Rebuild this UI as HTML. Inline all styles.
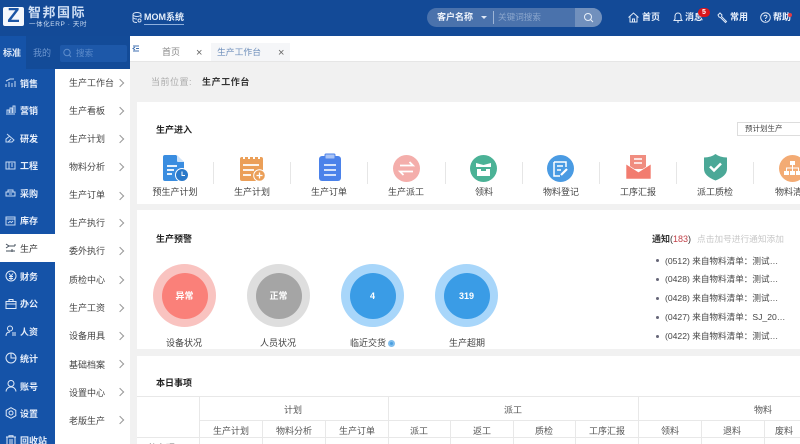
<!DOCTYPE html>
<html lang="zh"><head><meta charset="utf-8"><title>MOM系统</title>
<style>
*{box-sizing:border-box}
html,body{margin:0;padding:0;width:800px;height:444px;overflow:hidden;background:#f1f1f1;font-family:"Liberation Sans","Noto Sans CJK SC",sans-serif;color:#333}
#root{position:relative;width:800px;height:444px;overflow:hidden;background:#f1f1f1;filter:blur(.3px)}
.a{position:absolute;white-space:nowrap}
.s{position:absolute;left:20px;font-size:9px;line-height:14px;color:#e6eefa;font-weight:bold;white-space:nowrap}
.si{position:absolute;left:5px}
.m{position:absolute;left:69px;font-size:9px;line-height:14px;color:#444;white-space:nowrap}
.ch{position:absolute;left:117px;width:6px;height:6px;border-top:1px solid #999;border-right:1px solid #999;transform:rotate(45deg)}
.lab{position:absolute;font-size:9px;line-height:14px;color:#444;transform:translateX(-50%);white-space:nowrap}
.sep{position:absolute;top:162px;width:1px;height:22px;background:#e6e6e6}
.circ{position:absolute;top:264px;width:63px;height:63px;border-radius:50%}
.circ b{position:absolute;left:8.5px;top:8.5px;width:46px;height:46px;border-radius:50%;color:#fff;font-size:9px;line-height:46px;text-align:center}
.n{position:absolute;left:665px;font-size:8.6px;line-height:14px;color:#444;white-space:nowrap}
.dot{position:absolute;width:3px;height:3px;border-radius:50%;background:#667}
.h{position:absolute;background:#e8e8e8}
.th{position:absolute;font-size:9px;line-height:14px;color:#555;transform:translateX(-50%);white-space:nowrap}
svg{position:absolute;overflow:visible}
</style></head><body><div id="root">
<!-- header -->
<div class="a" style="left:0;top:0;width:800px;height:36px;background:#134a97"></div>
<div class="a" style="left:3px;top:7px;width:21px;height:19px;background:#f4f7fc;border-radius:2px"></div>
<div class="a" style="left:3px;top:6px;width:21px;height:21px;color:#1b55a5;font-size:20px;font-weight:bold;line-height:21px;text-align:center">Z</div>
<div class="a" style="left:28px;top:5px;font-size:13px;line-height:16px;letter-spacing:1.5px;color:#cfdff4;font-weight:bold">智邦国际</div>
<div class="a" style="left:29px;top:20px;font-size:6.5px;line-height:9px;letter-spacing:.6px;color:#cfdff4">一体化ERP · 天时</div>
<svg style="left:132px;top:12px" width="10" height="11" fill="none" stroke="#d5e2f5" stroke-width="1"><ellipse cx="5" cy="2.5" rx="4" ry="2"/><path d="M1 2.5V8.5C1 10 3 10.5 5 10.5M9 2.5V6M1 5.5C2 7 4 7 5 7"/><circle cx="7.5" cy="8.5" r="1.5"/></svg>
<div class="a" style="left:144px;top:11px;font-size:9px;line-height:13px;color:#e5eefa;font-weight:bold;border-bottom:1px solid #8fb0dd">MOM系统</div>
<!-- search -->
<div class="a" style="left:427px;top:8px;width:175px;height:19px;border-radius:10px;background:#4a72ac"></div>
<div class="a" style="left:575px;top:8px;width:27px;height:19px;border-radius:0 10px 10px 0;background:#7190bd"></div>
<div class="a" style="left:437px;top:11px;font-size:9px;line-height:13px;color:#eef3fb;font-weight:bold">客户名称</div>
<div class="a" style="left:481px;top:16px;border:3px solid transparent;border-top:3px solid #dfe8f5;border-bottom:0"></div>
<div class="a" style="left:493px;top:11px;width:1px;height:13px;background:#9db5d6"></div>
<div class="a" style="left:498px;top:11px;font-size:8.6px;line-height:13px;color:#8ba6cc">关键词搜索</div>
<svg style="left:583px;top:12px" width="11" height="11" fill="none" stroke="#e8eff9" stroke-width="1"><circle cx="5" cy="5" r="3.5"/><path d="M7.6 7.6L10 10"/></svg>
<svg style="left:628px;top:12px" width="11" height="11" fill="none" stroke="#dfe9f7" stroke-width="1"><path d="M.5 5.5L5.5 1L10.5 5.5M2 4.5V10H9V4.5M4.5 10V7H6.5V10"/></svg>
<div class="a" style="left:642px;top:11px;font-size:9px;line-height:13px;color:#e8f0fb;font-weight:bold">首页</div>
<svg style="left:673px;top:12px" width="10" height="11" fill="none" stroke="#dfe9f7" stroke-width="1"><path d="M1 8.5H9L8 7V4.5C8 2.5 6.8 1 5 1S2 2.5 2 4.5V7ZM4 10H6"/></svg>
<div class="a" style="left:685px;top:11px;font-size:9px;line-height:13px;color:#e8f0fb;font-weight:bold">消息</div>
<div class="a" style="left:698px;top:8px;width:12px;height:9px;border-radius:5px;background:#d9161e;color:#fff;font-size:7px;line-height:9px;text-align:center;font-weight:bold">5</div>
<svg style="left:717px;top:12px" width="11" height="11" fill="none" stroke="#dfe9f7" stroke-width="1"><path d="M1 3L3 1L5 3L4.5 4.5L9.5 9.5L8.5 10.5L3.5 5.5L2 5Z"/></svg>
<div class="a" style="left:730px;top:11px;font-size:9px;line-height:13px;color:#e8f0fb;font-weight:bold">常用</div>
<svg style="left:760px;top:12px" width="11" height="11" fill="none" stroke="#dfe9f7" stroke-width="1"><circle cx="5.5" cy="5.5" r="4.8"/><path d="M4 4.5C4 2.8 7 2.8 7 4.5C7 5.500 5.5 5.5 5.5 7M5.5 8V9"/></svg>
<div class="a" style="left:773px;top:11px;font-size:9px;line-height:13px;color:#e8f0fb;font-weight:bold">帮助</div>
<div class="a" style="left:788px;top:13px;width:4px;height:4px;border-radius:50%;background:#e23b45"></div>

<!-- sidebar -->
<div class="a" style="left:0;top:36px;width:55px;height:408px;background:#1553a8"></div>
<div class="a" style="left:26px;top:36px;width:29px;height:33px;background:#134b98"></div>
<div class="a" style="left:55px;top:36px;width:75px;height:33px;background:#134b98"></div>
<div class="a" style="left:60px;top:45px;width:67px;height:17px;border-radius:2px;background:#1d58a9"></div>
<svg style="left:63px;top:48px" width="9" height="10" fill="none" stroke="#5d8ccb" stroke-width="1"><circle cx="4" cy="4.5" r="3.2"/><path d="M6.3 7L8 9"/></svg>
<div class="a" style="left:76px;top:47px;font-size:8.6px;line-height:13px;color:#5d8ccb">搜索</div>
<div class="a" style="left:3px;top:47px;font-size:9px;line-height:13px;color:#dde8f7;font-weight:bold">标准</div>
<div class="a" style="left:33px;top:47px;font-size:9px;line-height:13px;color:#6d96cf">我的</div>
<div class="a" style="left:55px;top:69px;width:75px;height:375px;background:#fff"></div>
<div class="a" style="left:0;top:234px;width:55px;height:28px;background:#fff"></div>

<svg class="si" style="top:78px" width="11" height="10" fill="none" stroke="#c5d8f2"><path d="M1 9V6M4 9V4M7 9V5M10 9V3M1 3L5 1L9 1"/></svg><div class="s" style="top:77px">销售</div>
<svg class="si" style="top:105px" width="11" height="10" fill="none" stroke="#c5d8f2"><path d="M1 9H10M2 8V5H4V8M5 8V3H7V8M8 8V1H10V8"/></svg><div class="s" style="top:104px">营销</div>
<svg class="si" style="top:133px" width="11" height="10" fill="none" stroke="#c5d8f2"><path d="M2 1L9 7L7 9H1V6L5 3M3 9L6 6"/></svg><div class="s" style="top:132px">研发</div>
<svg class="si" style="top:161px" width="11" height="9" fill="none" stroke="#c5d8f2"><path d="M1 1H10V8H1ZM4 1V8M6 3H8M6 5H8"/></svg><div class="s" style="top:159px">工程</div>
<svg class="si" style="top:188px" width="11" height="9" fill="none" stroke="#c5d8f2"><path d="M1 4H10V8H1ZM3 4V2H8V4M4 6H7"/></svg><div class="s" style="top:187px">采购</div>
<svg class="si" style="top:216px" width="11" height="10" fill="none" stroke="#c5d8f2"><path d="M1 1H10V9H1ZM1 3H10M3 7L5 5.5L6.5 6.5L8 5"/></svg><div class="s" style="top:214px">库存</div>
<svg class="si" style="top:243px" width="11" height="10" fill="none" stroke="#46505e"><path d="M1 1L4 3L1 5M4 3H10M10 1V3M1 8H10M7 6V9"/></svg><div class="s" style="top:242px;color:#333;font-weight:normal">生产</div>
<svg class="si" style="top:270px" width="12" height="12" fill="none" stroke="#e0eaf8"><circle cx="6" cy="6" r="5"/><path d="M4 3.5L6 6L8 3.5M4 6.5H8M4 8.5H8M6 6V10"/></svg><div class="s" style="top:270px">财务</div>
<svg class="si" style="top:298px" width="12" height="12" fill="none" stroke="#e0eaf8"><path d="M1 3.5H11V10.5H1ZM4 3.5V1.5H8V3.5M1 6H11"/></svg><div class="s" style="top:297px">办公</div>
<svg class="si" style="top:325px" width="12" height="12" fill="none" stroke="#e0eaf8"><circle cx="5" cy="3.5" r="2.5"/><path d="M1 11C1 8 3 7 5 7M7 8H11M7 10H11"/></svg><div class="s" style="top:325px">人资</div>
<svg class="si" style="top:352px" width="12" height="12" fill="none" stroke="#e0eaf8"><circle cx="6" cy="6" r="5"/><path d="M6 1V6H11"/></svg><div class="s" style="top:352px">统计</div>
<svg class="si" style="top:380px" width="12" height="12" fill="none" stroke="#e0eaf8"><circle cx="6" cy="3.5" r="3"/><path d="M1 11.5C1.5 8.5 3.5 7 6 7S10.5 8.5 11 11.5"/></svg><div class="s" style="top:380px">账号</div>
<svg class="si" style="top:407px" width="12" height="12" fill="none" stroke="#e0eaf8"><path d="M6 .7L10.8 3.3V8.7L6 11.3L1.2 8.7V3.3Z"/><circle cx="6" cy="6" r="2"/></svg><div class="s" style="top:407px">设置</div>
<svg class="si" style="top:435px" width="12" height="12" fill="none" stroke="#e0eaf8"><path d="M1 2H11M4 2V.7H8V2M2 2V11H10V2M5 4V9M7 4V9"/></svg><div class="s" style="top:434px">回收站</div>

<div class="m" style="top:76px">生产工作台</div><div class="ch" style="top:80px"></div>
<div class="m" style="top:104px">生产看板</div><div class="ch" style="top:108px"></div>
<div class="m" style="top:132px">生产计划</div><div class="ch" style="top:136px"></div>
<div class="m" style="top:160px">物料分析</div><div class="ch" style="top:164px"></div>
<div class="m" style="top:188px">生产订单</div><div class="ch" style="top:193px"></div>
<div class="m" style="top:216px">生产执行</div><div class="ch" style="top:220px"></div>
<div class="m" style="top:244px">委外执行</div><div class="ch" style="top:248px"></div>
<div class="m" style="top:273px">质检中心</div><div class="ch" style="top:277px"></div>
<div class="m" style="top:301px">生产工资</div><div class="ch" style="top:305px"></div>
<div class="m" style="top:329px">设备用具</div><div class="ch" style="top:333px"></div>
<div class="m" style="top:358px">基础档案</div><div class="ch" style="top:361px"></div>
<div class="m" style="top:386px">设置中心</div><div class="ch" style="top:389px"></div>
<div class="m" style="top:414px">老版生产</div><div class="ch" style="top:417px"></div>

<!-- tabs -->
<div class="a" style="left:130px;top:36px;width:670px;height:26px;background:#fff;border-bottom:1px solid #e6e6e6"></div>
<div class="a" style="left:211px;top:43px;width:79px;height:18px;background:#f5f6f8"></div>
<svg style="left:133px;top:45px" width="7" height="7" fill="none" stroke="#3f6fb0"><path d="M0 1H6M3 3.5H6M0 6H6M2 2L0 3.5L2 5"/></svg>
<div class="a" style="left:162px;top:45px;font-size:9px;line-height:14px;color:#888">首页</div>
<div class="a" style="left:196px;top:46px;font-size:11px;line-height:14px;color:#666">×</div>
<div class="a" style="left:217px;top:45px;font-size:8.8px;line-height:14px;color:#6e8fbb">生产工作台</div>
<div class="a" style="left:278px;top:46px;font-size:11px;line-height:14px;color:#666">×</div>

<div class="a" style="left:151px;top:75px;font-size:9px;line-height:14px;color:#aaa;letter-spacing:.5px">当前位置:</div>
<div class="a" style="left:202px;top:75px;font-size:9px;line-height:14px;color:#333;font-weight:bold;letter-spacing:.6px">生产工作台</div>

<!-- card 1 -->
<div class="a" style="left:137px;top:102px;width:663px;height:102px;background:#fff"></div>
<div class="a" style="left:156px;top:123px;font-size:9px;line-height:14px;color:#222;font-weight:bold">生产进入</div>
<div class="a" style="left:737px;top:122px;width:70px;height:14px;background:#fff;border:1px solid #ddd;font-size:7.5px;line-height:12px;padding-left:7px;color:#444">预计划生产</div>

<svg style="left:162px;top:155px" width="27" height="27"><path d="M1 2Q1 0 3 0H14L22 7V24Q22 26 20 26H3Q1 26 1 24Z" fill="#3a8de0"/><path d="M15 0L22 7H16Q15 7 15 6Z" fill="#cfe3f8"/><path d="M5 11H15M5 15H12M5 19H10" stroke="#fff" stroke-width="1.8"/><circle cx="20" cy="20" r="6.5" fill="#2b79c9" stroke="#fff"/><path d="M20 16.5V20.5H23" stroke="#fff" fill="none"/></svg>
<div class="lab" style="left:175px;top:185px">预生产计划</div>
<div class="sep" style="left:213px"></div>
<svg style="left:240px;top:155px" width="26" height="27"><rect x="0" y="2" width="23" height="24" rx="2" fill="#eb9f58"/><path d="M4 0V4M9 0V4M14 0V4M19 0V4" stroke="#fff" stroke-width="2"/><path d="M3 10H19M3 15H14M3 20H11" stroke="#fff" stroke-width="1.8"/><circle cx="19.5" cy="20.5" r="5.8" fill="#eb9f58" stroke="#fff"/><path d="M16.5 20.5H22.5M19.5 17.5V23.5" stroke="#fff" stroke-width="1.3"/></svg>
<div class="lab" style="left:252px;top:185px">生产计划</div>
<div class="sep" style="left:290px"></div>
<svg style="left:319px;top:154px" width="23" height="27"><rect x="0" y="2" width="22" height="25" rx="3" fill="#4b82ea"/><rect x="6" y="0" width="10" height="5" rx="1" fill="#a9c3f5" stroke="#4b82ea"/><path d="M5 11H17M5 16H17M5 21H17" stroke="#fff" stroke-width="1.5"/></svg>
<div class="lab" style="left:329px;top:185px">生产订单</div>
<div class="sep" style="left:367px"></div>
<svg style="left:393px;top:155px" width="27" height="27"><circle cx="13.5" cy="13.5" r="13.5" fill="#f4aeab"/><path d="M7 10.5H20L16.5 7M20 16.5H7L10.5 20" stroke="#fff" stroke-width="1.8" fill="none"/></svg>
<div class="lab" style="left:406px;top:185px">生产派工</div>
<div class="sep" style="left:445px"></div>
<svg style="left:470px;top:155px" width="27" height="27"><circle cx="13.5" cy="13.5" r="13.5" fill="#4bb296"/><path d="M6 8L13.5 10L21 8V12H6ZM7 14H20V21H7Z" fill="#fff"/><path d="M11 13H16V16H11Z" fill="#4bb296"/></svg>
<div class="lab" style="left:484px;top:185px">领料</div>
<div class="sep" style="left:522px"></div>
<svg style="left:547px;top:155px" width="27" height="27"><circle cx="13.5" cy="13.5" r="13.5" fill="#4a9be3"/><path d="M7 7H19V12M7 7V21H13M10 11H16M10 15H14" stroke="#fff" stroke-width="1.5" fill="none"/><path d="M14 20L20 14" stroke="#fff" stroke-width="2.2"/></svg>
<div class="lab" style="left:561px;top:185px">物料登记</div>
<div class="sep" style="left:599px"></div>
<svg style="left:626px;top:155px" width="25" height="25"><path d="M4 0H20V14H4Z" fill="#f08d80"/><path d="M8 4H16M8 8H16" stroke="#fff" stroke-width="1.5"/><path d="M0 9L12.5 17L25 9V24H0Z" fill="#f27c6f" stroke="#fff" stroke-width=".6"/></svg>
<div class="lab" style="left:638px;top:185px">工序汇报</div>
<div class="sep" style="left:676px"></div>
<svg style="left:704px;top:154px" width="23" height="27"><path d="M11.5 0Q16 3.5 23 3.5V15Q23 22 11.5 26.5Q0 22 0 15V3.5Q7 3.5 11.5 0Z" fill="#4ba897"/><path d="M6 12.5L10 16.5L17 9.5" stroke="#fff" stroke-width="2.5" fill="none"/></svg>
<div class="lab" style="left:715px;top:185px">派工质检</div>
<div class="sep" style="left:753px"></div>
<svg style="left:779px;top:155px" width="27" height="27"><circle cx="13.5" cy="13.5" r="13.5" fill="#f3ab74"/><path d="M11 6H16V10H11ZM5 16H10V20H5ZM11 16H16V20H11ZM17 16H22V20H17Z" fill="#fff"/><path d="M13.5 10V16M7.5 16V13H19.5V16" stroke="#fff" fill="none"/></svg>
<div class="a" style="left:775px;top:185px;font-size:9px;line-height:14px;color:#444">物料清</div>

<!-- card 2 -->
<div class="a" style="left:137px;top:210px;width:663px;height:139px;background:#fff"></div>
<div class="a" style="left:156px;top:232px;font-size:9px;line-height:14px;color:#222;font-weight:bold">生产预警</div>
<div class="circ" style="left:153px;background:#f9c3c0"><b style="background:#fa8079">异常</b></div>
<div class="circ" style="left:247px;background:#dedede"><b style="background:#a5a5a5">正常</b></div>
<div class="circ" style="left:341px;background:#a8d6fa"><b style="background:#3a9ce6">4</b></div>
<div class="circ" style="left:435px;background:#a8d6fa"><b style="background:#3a9ce6">319</b></div>
<div class="lab" style="left:184px;top:336px">设备状况</div>
<div class="lab" style="left:278px;top:336px">人员状况</div>
<div class="lab" style="left:368px;top:336px">临近交货</div>
<div class="a" style="left:388px;top:340px;width:7px;height:7px;border-radius:50%;background:#4c9fe0;border:2px solid #7fbdec"></div>
<div class="lab" style="left:467px;top:336px">生产超期</div>

<div class="a" style="left:652px;top:232px;font-size:9px;line-height:14px;color:#333"><b>通知</b>(<span style="color:#c0434a">183</span>)</div>
<div class="a" style="left:697px;top:232px;font-size:8.7px;line-height:14px;color:#c8c8c8">点击加号进行通知添加</div>
<div class="dot" style="left:656px;top:259px"></div><div class="n" style="top:254px">(0512) 来自物料清单：测试…</div>
<div class="dot" style="left:656px;top:278px"></div><div class="n" style="top:272px">(0428) 来自物料清单：测试…</div>
<div class="dot" style="left:656px;top:297px"></div><div class="n" style="top:291px">(0428) 来自物料清单：测试…</div>
<div class="dot" style="left:656px;top:316px"></div><div class="n" style="top:310px">(0427) 来自物料清单：SJ_20…</div>
<div class="dot" style="left:656px;top:335px"></div><div class="n" style="top:329px">(0422) 来自物料清单：测试…</div>

<!-- card 3 -->
<div class="a" style="left:137px;top:356px;width:663px;height:88px;background:#fff"></div>
<div class="a" style="left:156px;top:376px;font-size:9px;line-height:14px;color:#222;font-weight:bold">本日事项</div>
<div class="h" style="left:137px;top:396px;width:663px;height:1px"></div>
<div class="h" style="left:199px;top:420px;width:601px;height:1px"></div>
<div class="h" style="left:137px;top:437px;width:663px;height:1px"></div>
<div class="h" style="left:199px;top:396px;width:1px;height:48px"></div>
<div class="h" style="left:388px;top:396px;width:1px;height:48px"></div>
<div class="h" style="left:638px;top:396px;width:1px;height:48px"></div>
<div class="h" style="left:262px;top:420px;width:1px;height:24px"></div>
<div class="h" style="left:325px;top:420px;width:1px;height:24px"></div>
<div class="h" style="left:450px;top:420px;width:1px;height:24px"></div>
<div class="h" style="left:513px;top:420px;width:1px;height:24px"></div>
<div class="h" style="left:575px;top:420px;width:1px;height:24px"></div>
<div class="h" style="left:701px;top:420px;width:1px;height:24px"></div>
<div class="h" style="left:764px;top:420px;width:1px;height:24px"></div>
<div class="th" style="left:293px;top:403px">计划</div>
<div class="th" style="left:513px;top:403px">派工</div>
<div class="th" style="left:763px;top:403px">物料</div>
<div class="th" style="left:231px;top:424px">生产计划</div>
<div class="th" style="left:294px;top:424px">物料分析</div>
<div class="th" style="left:357px;top:424px">生产订单</div>
<div class="th" style="left:419px;top:424px">派工</div>
<div class="th" style="left:482px;top:424px">返工</div>
<div class="th" style="left:544px;top:424px">质检</div>
<div class="th" style="left:607px;top:424px">工序汇报</div>
<div class="th" style="left:670px;top:424px">领料</div>
<div class="th" style="left:732px;top:424px">退料</div>
<div class="a" style="left:775px;top:424px;font-size:9px;line-height:14px;color:#555">废料</div>
<div class="a" style="left:148px;top:441px;font-size:9px;line-height:14px;color:#777">待办理</div>
</div></body></html>
